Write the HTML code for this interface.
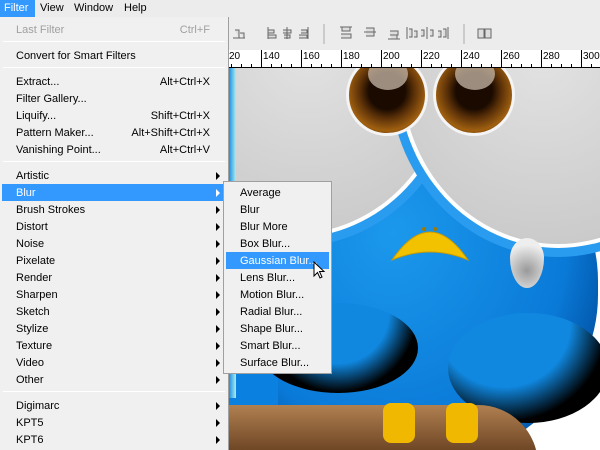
<!DOCTYPE html><html><head><style>
*{margin:0;padding:0;box-sizing:border-box}
body{width:600px;height:450px;overflow:hidden;position:relative;background:#fff;font-family:"Liberation Sans",Tahoma,sans-serif;font-size:11px;color:#000}
.a{position:absolute}
.mi{position:absolute;left:16px;height:17px;line-height:17px;white-space:nowrap}
.sc{position:absolute;right:18px;height:17px;line-height:17px}
.ar{position:absolute;left:216px;width:0;height:0;border-left:4px solid #000;border-top:4px solid transparent;border-bottom:4px solid transparent}
.sep{position:absolute;left:3px;width:222px;height:1px;background:#a0a0a0;border-bottom:1px solid #fff}
.si{position:absolute;left:16px;height:17px;line-height:17px}
</style></head><body>
<!-- toolbar -->
<div class="a" style="left:228px;top:17px;width:372px;height:33px;background:#ececec">
<svg class="a" style="left:0;top:0" width="372" height="33" fill="#ddd" stroke="#666" stroke-width="1">
<path d="M5 21h12M7 13h4v8M12 16h4v5"/>
<path d="M40 10v12M40 13h6v3h-6M40 18h8v3h-8"/>
<path d="M59 10v12M55 13h8v3h-8M56 18h6v3h-6"/>
<path d="M80 10v12M73 13h6v3h-6M71 18h8v3h-8"/>
<path d="M96 7v20" stroke="#aaa"/>
<path d="M112 10h12M114 10v4h8v-4M113 17h10v4h-10"/>
<path d="M136 15h12M138 11h8v8h-8"/>
<path d="M160 22h12M162 14h8v4h-8M163 18h6v4h-6"/>
<path d="M179 10v12M181 12h3v8h-3M186 14h3v6h-3"/>
<path d="M199 10v12M193 13h3v6h-3M202 13h3v6h-3"/>
<path d="M220 10v12M210 14h3v6h-3M215 12h3v8h-3"/>
<path d="M236 7v20" stroke="#aaa"/>
<path d="M250 12h6v9h-6zM257 12h6v9h-6z"/>
</svg></div>
<div class="a" style="left:228px;top:50px;width:372px;height:18px;background:#fff;border-bottom:1px solid #000;font-size:10px;overflow:hidden">
<svg class="a" style="left:0;top:0" width="372" height="18" stroke="#000"><path d="M0.5 0v18M33.5 0v18M73.5 0v18M113.5 0v18M153.5 0v18M193.5 0v18M233.5 0v18M273.5 0v18M313.5 0v18M353.5 0v18M3.5 14v4M13.5 14v4M23.5 14v4M43.5 14v4M53.5 14v4M63.5 14v4M83.5 14v4M93.5 14v4M103.5 14v4M123.5 14v4M133.5 14v4M143.5 14v4M163.5 14v4M173.5 14v4M183.5 14v4M203.5 14v4M213.5 14v4M223.5 14v4M243.5 14v4M253.5 14v4M263.5 14v4M283.5 14v4M293.5 14v4M303.5 14v4M323.5 14v4M333.5 14v4M343.5 14v4M363.5 14v4"/></svg>
<span class="a" style="left:1px;top:1px">20</span><span class="a" style="left:35px;top:1px">140</span><span class="a" style="left:75px;top:1px">160</span><span class="a" style="left:115px;top:1px">180</span><span class="a" style="left:155px;top:1px">200</span><span class="a" style="left:195px;top:1px">220</span><span class="a" style="left:235px;top:1px">240</span><span class="a" style="left:275px;top:1px">260</span><span class="a" style="left:315px;top:1px">280</span><span class="a" style="left:355px;top:1px">300</span>
</div>
<!-- canvas -->
<div class="a" style="left:228px;top:68px;width:372px;height:382px;overflow:hidden;background:#fff">
 <div class="a" style="left:-40px;top:40px;width:410px;height:360px;border-radius:48%;background:radial-gradient(ellipse at 50% 35%,#1b98ec,#0a7ad8 60%,#0050a0 80%,#000 95%)"></div>
 <div class="a" style="left:-10px;top:40px;width:60px;height:320px;background:#0a80e0"></div>
 <div class="a" style="left:30px;top:235px;width:160px;height:90px;border-radius:50%;background:radial-gradient(ellipse at 50% 10%,#1088e0 45%,#000 70%)"></div>
 <div class="a" style="left:220px;top:245px;width:160px;height:110px;border-radius:50%;background:radial-gradient(ellipse at 35% 10%,#1088e0 45%,#000 70%)"></div>
 <div class="a" style="left:-95px;top:-170px;width:320px;height:340px;border-radius:50%;background:radial-gradient(circle at 55% 45%,#e2e2e2,#cacaca 75%,#b8b8b8);border:4px solid #fff;box-shadow:0 0 0 9px #2a9cf0"></div>
 <div class="a" style="left:170px;top:-165px;width:320px;height:345px;border-radius:50%;background:radial-gradient(circle at 45% 45%,#e2e2e2,#cacaca 75%,#b8b8b8);border:4px solid #fff;box-shadow:0 0 0 9px #2a9cf0"></div>
 <div class="a" style="left:0;top:0;width:8px;height:330px;background:linear-gradient(90deg,#0a80e0,#aee)"></div>
 <div class="a" style="left:118px;top:-14px;width:82px;height:82px;border-radius:50%;background:radial-gradient(circle at 50% 45%,#1a0a00 32%,#5a3008 48%,#a06010 70%,#3a1a00 92%);border:3px solid #f4f4f4"></div>
 <div class="a" style="left:205px;top:-14px;width:82px;height:82px;border-radius:50%;background:radial-gradient(circle at 50% 45%,#1a0a00 32%,#5a3008 48%,#a06010 70%,#3a1a00 92%);border:3px solid #f4f4f4"></div>
 <div class="a" style="left:140px;top:-10px;width:40px;height:32px;border-radius:50%;background:rgba(200,185,170,.75)"></div>
 <div class="a" style="left:227px;top:-10px;width:40px;height:32px;border-radius:50%;background:rgba(200,185,170,.75)"></div>
 <svg class="a" style="left:162px;top:150px" width="80" height="46"><path d="M2 42 Q40 -14 78 42 Q40 26 2 42 Z" fill="#f2c200" stroke="#c89a00"/><circle cx="34" cy="11" r="2" fill="#a07800"/><circle cx="45" cy="11" r="2" fill="#a07800"/></svg>
 <div class="a" style="left:282px;top:170px;width:34px;height:50px;border-radius:50% 50% 50% 50%/40% 40% 60% 60%;background:radial-gradient(circle at 50% 65%,#999,#eee 70%)"></div>
 <div class="a" style="left:-20px;top:337px;width:330px;height:60px;border-radius:20px 60px 0 0;background:linear-gradient(#b08050,#5a3418)"></div>
 <div class="a" style="left:155px;top:335px;width:32px;height:40px;border-radius:8px;background:#f0b800"></div>
 <div class="a" style="left:218px;top:335px;width:32px;height:40px;border-radius:8px;background:#f0b800"></div>
</div>
<!-- menu bar -->
<div class="a" style="left:0;top:0;width:600px;height:17px;background:#ececec"></div>
<div class="a" style="left:0;top:0;width:35px;height:17px;background:#3399ff;color:#fff;line-height:17px;padding-left:4px">Filter</div>
<div class="a" style="left:40px;top:0;line-height:17px">View</div>
<div class="a" style="left:74px;top:0;line-height:17px">Window</div>
<div class="a" style="left:124px;top:0;line-height:17px">Help</div>
<!-- main menu -->
<div class="a" style="left:0;top:17px;width:229px;height:433px;background:#f0f0f0;border-right:1px solid #a0a0a0">
 <div class="mi" style="top:5px;color:#a0a0a0">Last Filter</div><div class="sc" style="top:5px;color:#a0a0a0">Ctrl+F</div>
 <div class="sep" style="top:24px"></div>
 <div class="mi" style="top:31px">Convert for Smart Filters</div>
 <div class="sep" style="top:50px"></div>
 <div class="mi" style="top:57px">Extract...</div><div class="sc" style="top:57px">Alt+Ctrl+X</div>
 <div class="mi" style="top:74px">Filter Gallery...</div>
 <div class="mi" style="top:91px">Liquify...</div><div class="sc" style="top:91px">Shift+Ctrl+X</div>
 <div class="mi" style="top:108px">Pattern Maker...</div><div class="sc" style="top:108px">Alt+Shift+Ctrl+X</div>
 <div class="mi" style="top:125px">Vanishing Point...</div><div class="sc" style="top:125px">Alt+Ctrl+V</div>
 <div class="sep" style="top:144px"></div>
 <div class="a" style="left:2px;top:167px;width:221px;height:17px;background:#3399ff"></div>
 <div class="mi" style="top:151px">Artistic</div><div class="ar" style="top:155px"></div>
 <div class="mi" style="top:168px;color:#fff">Blur</div><div class="ar" style="top:172px;border-left-color:#fff"></div>
 <div class="mi" style="top:185px">Brush Strokes</div><div class="ar" style="top:189px"></div>
 <div class="mi" style="top:202px">Distort</div><div class="ar" style="top:206px"></div>
 <div class="mi" style="top:219px">Noise</div><div class="ar" style="top:223px"></div>
 <div class="mi" style="top:236px">Pixelate</div><div class="ar" style="top:240px"></div>
 <div class="mi" style="top:253px">Render</div><div class="ar" style="top:257px"></div>
 <div class="mi" style="top:270px">Sharpen</div><div class="ar" style="top:274px"></div>
 <div class="mi" style="top:287px">Sketch</div><div class="ar" style="top:291px"></div>
 <div class="mi" style="top:304px">Stylize</div><div class="ar" style="top:308px"></div>
 <div class="mi" style="top:321px">Texture</div><div class="ar" style="top:325px"></div>
 <div class="mi" style="top:338px">Video</div><div class="ar" style="top:342px"></div>
 <div class="mi" style="top:355px">Other</div><div class="ar" style="top:359px"></div>
 <div class="sep" style="top:374px"></div>
 <div class="mi" style="top:381px">Digimarc</div><div class="ar" style="top:385px"></div>
 <div class="mi" style="top:398px">KPT5</div><div class="ar" style="top:402px"></div>
 <div class="mi" style="top:415px">KPT6</div><div class="ar" style="top:419px"></div>
</div>
<!-- submenu -->
<div class="a" style="left:223px;top:181px;width:109px;height:193px;background:#f0f0f0;border:1px solid #a0a0a0">
 <div class="a" style="left:2px;top:70px;width:103px;height:17px;background:#3399ff"></div>
 <div class="si" style="top:3px">Average</div>
 <div class="si" style="top:20px">Blur</div>
 <div class="si" style="top:37px">Blur More</div>
 <div class="si" style="top:54px">Box Blur...</div>
 <div class="si" style="top:71px;color:#fff">Gaussian Blur...</div>
 <div class="si" style="top:88px">Lens Blur...</div>
 <div class="si" style="top:105px">Motion Blur...</div>
 <div class="si" style="top:122px">Radial Blur...</div>
 <div class="si" style="top:139px">Shape Blur...</div>
 <div class="si" style="top:156px">Smart Blur...</div>
 <div class="si" style="top:173px">Surface Blur...</div>
</div>
<svg class="a" style="left:313px;top:261px" width="14" height="20"><path d="M1 1 L1 15 L4.5 11.5 L7 17 L9 16 L6.5 10.5 L11 10.5 Z" fill="#fff" stroke="#000"/></svg>
</body></html>
